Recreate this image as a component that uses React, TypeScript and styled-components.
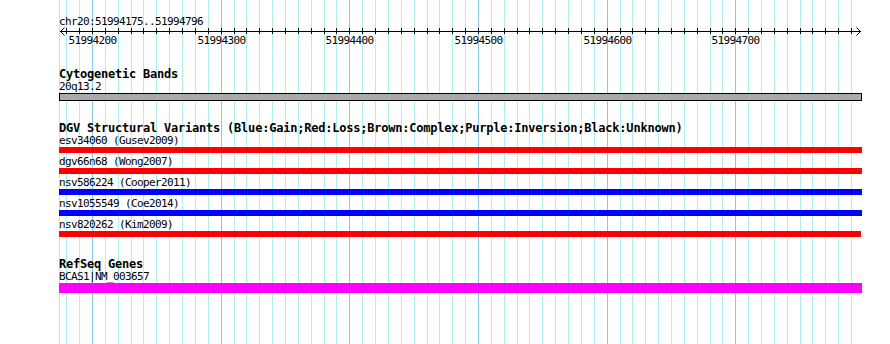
import styled, { createGlobalStyle } from "styled-components";

// view: chr20:51994175..51994796
const TRACK_LEFT = 59;
const TRACK_WIDTH = 803;
const PX_PER_BP = 1.2866;
const MONO = '"DejaVu Sans Mono", "Liberation Mono", monospace';
const toX = (pos: number) => Math.round(92 + (pos - 51994200) * PX_PER_BP);

const gridPositions: number[] = [];
for (let p = 51994180; p <= 51994790; p += 10) gridPositions.push(p);

const majorTicks = [51994200, 51994300, 51994400, 51994500, 51994600, 51994700];

interface IFeature {
  name: string;
  color: string;
  width: number;
}

const dgvFeatures: IFeature[] = [
  { name: "esv34060 (Gusev2009)", color: "#ff0000", width: 803 },
  { name: "dgv66n68 (Wong2007)", color: "#ff0000", width: 803 },
  { name: "nsv586224 (Cooper2011)", color: "#0000ff", width: 803 },
  { name: "nsv1055549 (Coe2014)", color: "#0000ff", width: 803 },
  { name: "nsv820262 (Kim2009)", color: "#ff0000", width: 802 },
];

const GlobalStyle = createGlobalStyle`
  body {
    margin: 0;
    background: #ffffff;
  }
`;

const Page = styled.div`
  position: relative;
  width: 890px;
  height: 344px;
  overflow: hidden;
  background: #ffffff;
  font-family: ${MONO};
  color: #000000;
`;

const GridLayer = styled.svg`
  position: absolute;
  top: 0;
  left: 0;
  z-index: 0;
`;

const Content = styled.div`
  position: relative;
  z-index: 1;
  display: flex;
  flex-direction: column;
  width: ${TRACK_WIDTH}px;
  padding: 16px 0 0 ${TRACK_LEFT}px;
`;

const RulerLabel = styled.div`
  font-size: 11px;
  line-height: 11px;
  padding-bottom: 1px;
  letter-spacing: -0.62px;
  white-space: nowrap;
`;

const RulerSvg = styled.svg`
  display: block;
  overflow: visible;
`;

const Track = styled.section`
  display: flex;
  flex-direction: column;
  margin-top: 21px;
`;

const TrackTitle = styled.div`
  font-size: 12px;
  font-weight: bold;
  line-height: 12px;
  padding-bottom: 1px;
  letter-spacing: -0.22px;
  white-space: nowrap;
`;

const FeatureList = styled.div`
  display: flex;
  flex-direction: column;
  gap: 3px;
`;

const FeatureRow = styled.div`
  display: flex;
  flex-direction: column;
`;

const FeatureLabel = styled.div`
  font-size: 11px;
  line-height: 11px;
  padding-bottom: 1px;
  letter-spacing: -0.62px;
  white-space: nowrap;
`;

const Band = styled.div`
  box-sizing: border-box;
  width: ${TRACK_WIDTH}px;
  height: 8px;
  border: 1px solid #000000;
  background: #aaaaaa;
`;

const FeatureBar = styled.div<{ $color: string; $width: number; $height: number }>`
  width: ${(p) => p.$width}px;
  height: ${(p) => p.$height}px;
  background: ${(p) => p.$color};
`;

function Grid() {
  return (
    <GridLayer width={890} height={344}>
      <rect x={TRACK_LEFT} y={0} width={1} height={344} fill="#b0eef0" />
      {gridPositions.map((p) => (
        <rect
          key={p}
          x={toX(p)}
          y={0}
          width={1}
          height={344}
          fill={p % 100 === 0 ? "#8cc8e6" : "#b0eef0"}
        />
      ))}
    </GridLayer>
  );
}

function Ruler() {
  const ox = (x: number) => x - TRACK_LEFT;
  return (
    <>
      <RulerLabel>chr20:51994175..51994796</RulerLabel>
      <RulerSvg width={TRACK_WIDTH} height={19}>
        <rect x={1} y={3} width={801} height={1} fill="#000" />
        <path d="M5.5 -0.5 L1.5 3.5 L5.5 7.5" stroke="#000" fill="none" />
        <path d="M797.5 -0.5 L801.5 3.5 L797.5 7.5" stroke="#000" fill="none" />
        {gridPositions.map((p) => (
          <rect key={p} x={ox(toX(p))} y={0} width={1} height={6} fill="#000" />
        ))}
        {majorTicks.map((p) => (
          <text
            key={p}
            x={ox(toX(p)) + 0.5}
            y={16}
            textAnchor="middle"
            fontSize={11}
            letterSpacing={-0.62}
            fontFamily={MONO}
          >
            {p}
          </text>
        ))}
      </RulerSvg>
    </>
  );
}

export default function App() {
  return (
    <Page>
      <GlobalStyle />
      <Grid />
      <Content>
        <Ruler />

        <Track>
          <TrackTitle>Cytogenetic Bands</TrackTitle>
          <FeatureLabel>20q13.2</FeatureLabel>
          <Band />
        </Track>

        <Track>
          <TrackTitle>
            DGV Structural Variants (Blue:Gain;Red:Loss;Brown:Complex;Purple:Inversion;Black:Unknown)
          </TrackTitle>
          <FeatureList>
            {dgvFeatures.map((f) => (
              <FeatureRow key={f.name}>
                <FeatureLabel>{f.name}</FeatureLabel>
                <FeatureBar $color={f.color} $width={f.width} $height={6} />
              </FeatureRow>
            ))}
          </FeatureList>
        </Track>

        <Track>
          <TrackTitle>RefSeq Genes</TrackTitle>
          <FeatureLabel>BCAS1|NM_003657</FeatureLabel>
          <FeatureBar $color="#ff00ff" $width={TRACK_WIDTH} $height={10} />
        </Track>
      </Content>
    </Page>
  );
}
